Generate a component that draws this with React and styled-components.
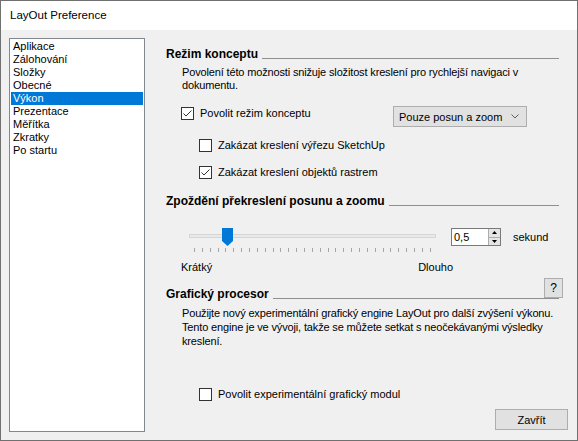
import React from "react";
import styled, { createGlobalStyle } from "styled-components";

const GlobalStyle = createGlobalStyle`
  html, body {
    margin: 0;
    padding: 0;
    background: #ffffff;
  }
  * {
    box-sizing: border-box;
  }
`;

const categories = [
  "Aplikace",
  "Zálohování",
  "Složky",
  "Obecné",
  "Výkon",
  "Prezentace",
  "Měřítka",
  "Zkratky",
  "Po startu"
];

const Window = styled.div`
  width: 578px;
  height: 441px;
  border: 1px solid #707070;
  background: #f0f0f0;
  display: flex;
  flex-direction: column;
  font-family: "Liberation Sans", Arial, sans-serif;
  font-size: 11px;
  color: #000;
`;

const TitleBar = styled.div`
  height: 30px;
  background: #fff;
  display: flex;
  align-items: center;
  padding-left: 9px;
  padding-bottom: 1px;
  font-size: 11.5px;
`;

const Body = styled.div`
  flex: 1;
  display: flex;
  padding: 8px 9px 8px 8px;
`;

const List = styled.div`
  width: 136px;
  height: 394px;
  border: 1px solid #828790;
  background: #fff;
  padding: 1px;
`;

const ListItem = styled.div`
  height: 13px;
  line-height: 13px;
  padding-left: 2px;
  background: ${p => (p.$selected ? "#0078d7" : "transparent")};
  color: ${p => (p.$selected ? "#fff" : "#000")};
  white-space: nowrap;
`;

const Panel = styled.div`
  flex: 1;
  margin-left: 21px;
  padding-top: 9px;
  display: flex;
  flex-direction: column;
`;

const Heading = styled.div`
  position: relative;
  display: flex;
  align-items: flex-end;
  margin-top: ${p => p.$top || 0}px;
  font-weight: bold;
  font-size: 12px;
  line-height: 14px;
  white-space: nowrap;

  &::after {
    content: "";
    flex: 1;
    border-bottom: 1px solid #8f8f8f;
    margin: 0 9px 2px 4px;
  }
`;

const Para = styled.p`
  margin: 5px 0 0 16px;
  line-height: ${p => p.$lh || 13}px;
  white-space: nowrap;
  letter-spacing: -0.15px;
`;

const Row = styled.div`
  display: grid;
  grid-template-columns: 212px 134px;
  align-items: start;
  margin: 14px 0 0 15px;
`;

const CheckRow = styled.label`
  display: flex;
  align-items: center;
  margin-top: ${p => p.$top || 0}px;
  margin-left: ${p => p.$indent || 0}px;
  line-height: 13px;
`;

const Box = styled.span`
  width: 13px;
  height: 13px;
  border: 1px solid #333;
  background: #fff;
  display: inline-flex;
  align-items: center;
  justify-content: center;
  margin-right: 6px;
  flex-shrink: 0;
`;

const Select = styled.div`
  height: 21px;
  border: 1px solid #adadad;
  background: #e1e1e1;
  display: flex;
  align-items: center;
  justify-content: space-between;
  padding: 0 7px 0 5px;
`;

const SliderRow = styled.div`
  display: flex;
  align-items: flex-start;
  margin: 20px 0 0 23px;
`;

const Slider = styled.div`
  position: relative;
  width: 247px;
  padding-top: 6px;
`;

const Track = styled.div`
  height: 4px;
  border: 1px solid #d6d6d6;
  background: #e7eaea;
`;

const Thumb = styled.svg`
  position: absolute;
  left: 33px;
  top: 0;
`;

const Ticks = styled.div`
  display: flex;
  justify-content: space-between;
  margin: 10px 5px 0 5px;
`;

const Tick = styled.span`
  width: 1px;
  height: 4px;
  background: #a5a5a5;
`;

const Spinner = styled.div`
  display: flex;
  margin-left: 15px;
  height: 18px;
  border: 1px solid #7a7a7a;
  background: #fff;
`;

const SpinInput = styled.div`
  width: 36px;
  padding-left: 2px;
  line-height: 16px;
`;

const SpinButtons = styled.div`
  width: 12px;
  display: flex;
  flex-direction: column;
  border-left: 1px solid #acacac;
`;

const SpinButton = styled.div`
  flex: 1;
  background: #e5e5e5;
  display: flex;
  align-items: center;
  justify-content: center;
  & + & {
    border-top: 1px solid #acacac;
  }
`;

const Unit = styled.span`
  margin-left: 12px;
  line-height: 18px;
`;

const ScaleLabels = styled.div`
  display: flex;
  justify-content: space-between;
  width: 272px;
  margin: 9px 0 0 15px;
  line-height: 13px;
`;

const Button = styled.button`
  font-family: inherit;
  font-size: 11px;
  color: #000;
  background: #e1e1e1;
  border: 1px solid #adadad;
  padding: 0;
  display: flex;
  align-items: center;
  justify-content: center;
`;

const HelpButton = styled(Button)`
  position: absolute;
  right: 5px;
  bottom: 3px;
  width: 19px;
  height: 20px;
  font-weight: normal;
  font-size: 12px;
`;

const CloseButton = styled(Button)`
  align-self: flex-end;
  width: 73px;
  height: 21px;
  margin-top: 8px;
`;

const Check = () => (
  <svg width="11" height="11" viewBox="0 0 11 11">
    <path d="M1.5 5.5 L4 8 L9.5 2.5" fill="none" stroke="#333" strokeWidth="1" />
  </svg>
);

const CheckBox = ({ checked, children, ...rest }) => (
  <CheckRow {...rest}>
    <Box>{checked && <Check />}</Box>
    <span>{children}</span>
  </CheckRow>
);

export default function App() {
  const ticks = Array.from({ length: 31 });

  return (
    <>
      <GlobalStyle />
      <Window>
        <TitleBar>LayOut Preference</TitleBar>
        <Body>
          <List>
            {categories.map(c => (
              <ListItem key={c} $selected={c === "Výkon"}>
                {c}
              </ListItem>
            ))}
          </List>
          <Panel>
            <Heading>Režim konceptu</Heading>
            <Para>
              Povolení této možnosti snižuje složitost kreslení pro rychlejší navigaci v
              <br />
              dokumentu.
            </Para>
            <Row>
              <CheckBox checked $top={1}>Povolit režim konceptu</CheckBox>
              <Select>
                <span>Pouze posun a zoom</span>
                <svg width="8" height="5" viewBox="0 0 8 5">
                  <path d="M0.5 0.5 L4 4 L7.5 0.5" fill="none" stroke="#606060" strokeWidth="1" />
                </svg>
              </Select>
            </Row>
            <CheckBox $top={12} $indent={33}>Zakázat kreslení výřezu SketchUp</CheckBox>
            <CheckBox checked $top={14} $indent={33}>Zakázat kreslení objektů rastrem</CheckBox>

            <Heading $top={15}>Zpoždění překreslení posunu a zoomu</Heading>
            <SliderRow>
              <Slider>
                <Track />
                <Thumb width="11" height="18" viewBox="0 0 11 18">
                  <path d="M0 0H11V13L5.5 18L0 13Z" fill="#0078d7" />
                </Thumb>
                <Ticks>
                  {ticks.map((_, i) => (
                    <Tick key={i} />
                  ))}
                </Ticks>
              </Slider>
              <Spinner>
                <SpinInput>0,5</SpinInput>
                <SpinButtons>
                  <SpinButton>
                    <svg width="5" height="3" viewBox="0 0 5 3">
                      <path d="M0 3H5L2.5 0Z" fill="#000" />
                    </svg>
                  </SpinButton>
                  <SpinButton>
                    <svg width="5" height="3" viewBox="0 0 5 3">
                      <path d="M0 0H5L2.5 3Z" fill="#000" />
                    </svg>
                  </SpinButton>
                </SpinButtons>
              </Spinner>
              <Unit>sekund</Unit>
            </SliderRow>
            <ScaleLabels>
              <span>Krátký</span>
              <span>Dlouho</span>
            </ScaleLabels>

            <Heading $top={13}>
              Grafický procesor
              <HelpButton>?</HelpButton>
            </Heading>
            <Para $lh={14}>
              Použijte nový experimentální grafický engine LayOut pro další zvýšení výkonu.
              <br />
              Tento engine je ve vývoji, takže se můžete setkat s neočekávanými výsledky
              <br />
              kreslení.
            </Para>
            <CheckBox $top={40} $indent={33}>Povolit experimentální grafický modul</CheckBox>
            <CloseButton>Zavřít</CloseButton>
          </Panel>
        </Body>
      </Window>
    </>
  );
}
